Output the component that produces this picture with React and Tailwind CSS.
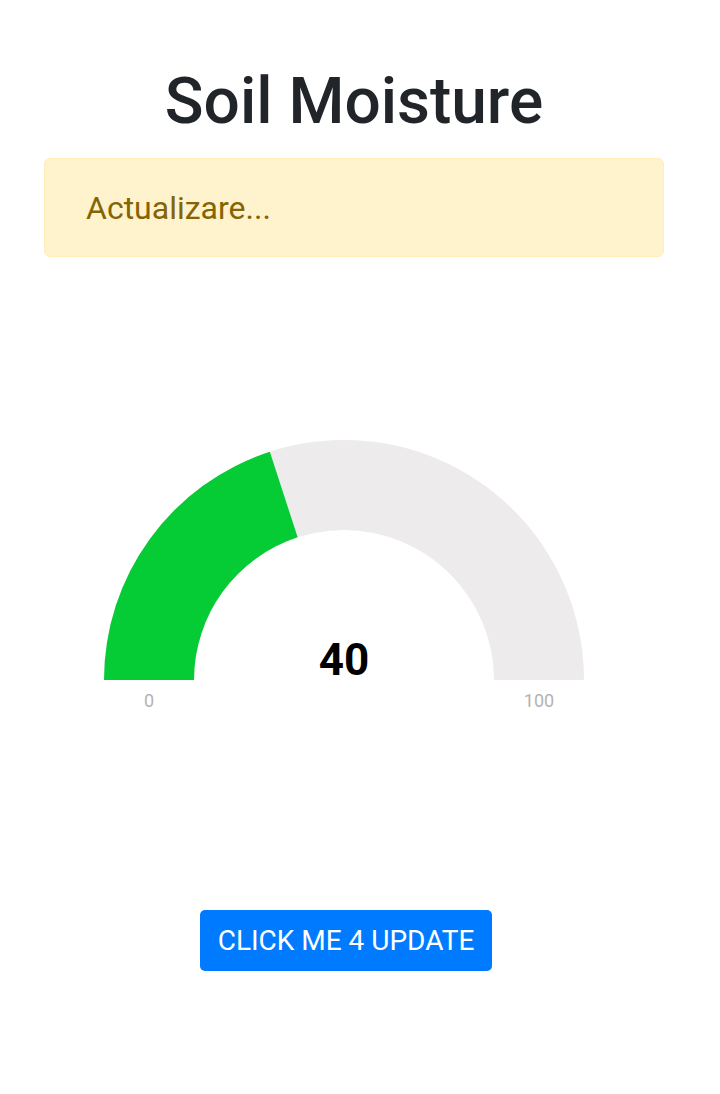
import React from "react";

function arcPath(cx, cy, rO, rI, a0, a1) {
  const p = (r, a) => [cx + r * Math.cos((a * Math.PI) / 180), cy - r * Math.sin((a * Math.PI) / 180)];
  const [x0, y0] = p(rO, a0);
  const [x1, y1] = p(rO, a1);
  const [x2, y2] = p(rI, a1);
  const [x3, y3] = p(rI, a0);
  return `M${x0} ${y0} A${rO} ${rO} 0 0 1 ${x1} ${y1} L${x2} ${y2} A${rI} ${rI} 0 0 0 ${x3} ${y3} Z`;
}

export default function App() {
  const value = 40;
  const ang = 180 - (value / 100) * 180;
  return (
    <div className="w-[720px] h-[1094px] bg-white" style={{ fontFamily: "Roboto, 'Liberation Sans', sans-serif" }}>
      <div className="ml-[44px] w-[620px] pt-[62px]">
        <h1 className="text-center text-[64px] leading-[80px] font-medium text-[#212529]">Soil Moisture</h1>
        <div className="mt-[16px] h-[99px] rounded-[6px] border border-[#ffeeba] bg-[#fff3cd] pl-[41px] flex items-center text-[32px] text-[#856404]">
          Actualizare...
        </div>
        <div className="mt-[183px] ml-[60px] w-[480px] relative">
          <svg width="480" height="241" viewBox="0 0 480 241" className="block">
            <path d={arcPath(240, 240, 240, 150, 180, 0)} fill="#edebeb" />
            <path d={arcPath(240, 240, 240, 150, 180, ang)} fill="#05cc34" />
          </svg>
          <div className="absolute left-0 right-0 top-[196px] text-center text-[44px] leading-[48px] font-bold text-black">{value}</div>
          <div className="flex justify-between text-[18px] text-[#b3b3b3] leading-[20px] mt-[10px]">
            <span className="w-[90px] text-center">0</span>
            <span className="w-[90px] text-center">100</span>
          </div>
        </div>
        <div className="mt-[199px] flex">
          <button className="ml-[156px] h-[61px] w-[292px] rounded-[5px] bg-[#007bff] text-white text-[28px]">CLICK ME 4 UPDATE</button>
        </div>
      </div>
    </div>
  );
}
